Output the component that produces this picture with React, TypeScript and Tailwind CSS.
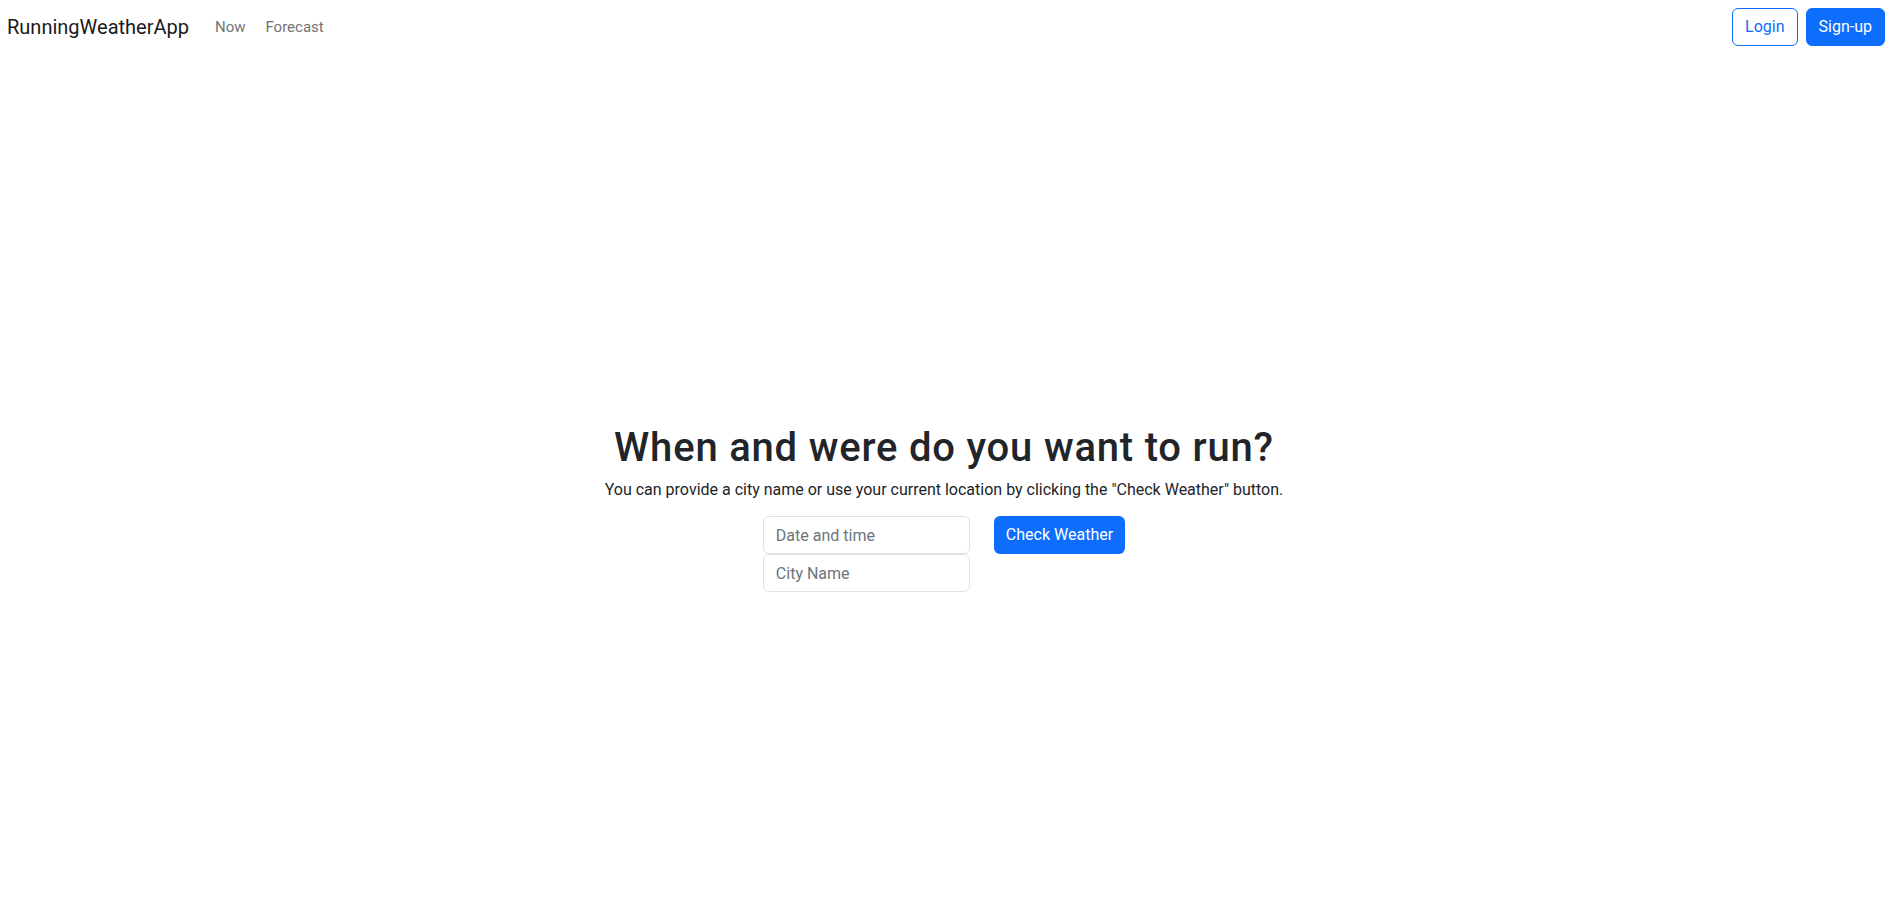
import type { ReactNode } from "react";

export default function App() {
  return (
    <div className="min-h-screen bg-white font-['Roboto',sans-serif] text-[#212529]">
      <NavBar />

      <main className="flex flex-col items-center pt-[370px]">
        <h1 className="text-[40px] font-medium leading-[1.2] tracking-[0.02em]">
          When and were do you want to run?
        </h1>
        <p className="mt-[6px] text-base leading-6">
          You can provide a city name or use your current location by clicking the "Check Weather" button.
        </p>

        <form className="mt-[14px] flex items-start gap-6">
          <div className="flex w-[207px] flex-col">
            <TextInput placeholder="Date and time" />
            <TextInput placeholder="City Name" />
          </div>
          <button
            type="button"
            className="h-[38px] rounded-md bg-[#0d6efd] px-3 text-base text-white"
          >
            Check Weather
          </button>
        </form>
      </main>
    </div>
  );
}

function NavBar() {
  return (
    <nav className="flex h-[54px] items-center justify-between pl-[7px] pr-[3px]">
      <div className="flex items-center">
        <a className="mr-4 text-xl text-[#1a1a1a]">RunningWeatherApp</a>
        <NavLink>Now</NavLink>
        <NavLink>Forecast</NavLink>
      </div>

      <div className="flex items-center gap-2">
        <button
          type="button"
          className="h-[38px] rounded-md border border-[#0d6efd] px-3 text-base text-[#0d6efd]"
        >
          Login
        </button>
        <button
          type="button"
          className="h-[38px] rounded-md border border-[#0d6efd] bg-[#0d6efd] px-3 text-base text-white"
        >
          Sign-up
        </button>
      </div>
    </nav>
  );
}

function NavLink({ children }: { children: ReactNode }) {
  return (
    <a className="px-[10px] text-[15px] text-[#737373]">{children}</a>
  );
}

function TextInput({ placeholder }: { placeholder: string }) {
  return (
    <input
      placeholder={placeholder}
      className="h-[38px] w-full rounded-md border border-[#dee2e6] px-3 text-base text-[#212529] outline-none placeholder:text-[#6c757d]"
    />
  );
}
